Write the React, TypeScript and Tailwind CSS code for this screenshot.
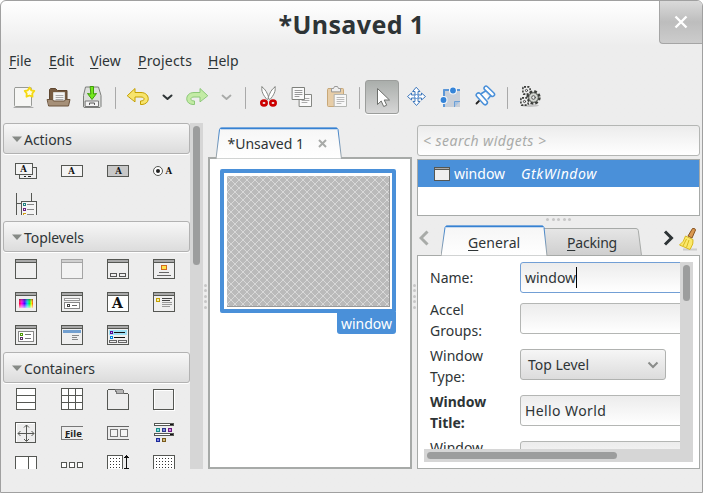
import React from "react";

type Kids = { children?: React.ReactNode };

/* One palette cell; drawings use the cell's own 46x33 pixel space. */
function Cell({ children }: Kids) {
  return (
    <svg className="block h-[33px] w-[46px]" viewBox="0 0 46 33" shapeRendering="crispEdges" fill="none">
      {children}
    </svg>
  );
}

function Glyph({ x, y, size = 9, children }: Kids & { x: number; y: number; size?: number }) {
  return (
    <text x={x} y={y} fontSize={size} fontWeight="bold" fontFamily="DejaVu Serif, serif" fill="#111" textAnchor="middle">
      {children}
    </text>
  );
}

function Win({ fill = "#efefef", stroke = "#555753", bar = "#a9a9a9", children }: Kids & { fill?: string; stroke?: string; bar?: string }) {
  return (
    <Cell>
      <rect x="12.5" y="6.5" width="21" height="19" rx="1" fill={fill} stroke={stroke} />
      <rect x="13" y="7" width="20" height="2" fill={bar} />
      <path d="M13 9.5h20" stroke={stroke} />
      {children}
    </Cell>
  );
}

function Tag({ x, y, color }: { x: number; y: number; color: string }) {
  return <rect x={x + 0.5} y={y + 0.5} width="2" height="2" stroke={color} />;
}

function Header({ title }: { title: string }) {
  return (
    <div className="flex h-8 w-[187px] shrink-0 pb-px">
      <div className="flex flex-1 items-center rounded-[3px] border border-[#b2b2b2] bg-linear-to-b from-[#f7f7f7] to-[#dcdcdc] pl-2 shadow-[0_1px_0_#fff]">
        <svg className="h-[6px] w-[10px]" viewBox="0 0 10 6">
          <path d="M0 .5h10L5 6z" fill="#868a86" />
        </svg>
        <span className="ml-[2px] pt-[2px] text-[14px] leading-none tracking-[-0.05px]">{title}</span>
      </div>
    </div>
  );
}

function Grid({ children }: Kids) {
  return <div className="grid shrink-0 grid-cols-[repeat(4,46px)]">{children}</div>;
}

function Palette() {
  return (
    <div className="flex h-[346px] w-[200px]">
      <div className="flex w-[187px] flex-col overflow-hidden">
        <Header title="Actions" />
        <Grid>
          <Cell>
            <rect x="16.5" y="12.5" width="17" height="11" rx="1" fill="#eee" stroke="#555753" />
            <path d="M21 21.5h2M25 21.5h3" stroke="#222" />
            <rect x="12.5" y="8.5" width="17" height="11" rx="1" fill="#f4f4f4" stroke="#555753" />
            <Glyph x={20.5} y={17} size={8.5}>A</Glyph>
          </Cell>
          <Cell>
            <rect x="12.5" y="10.5" width="21" height="11" rx="1" fill="#f4f4f4" stroke="#555753" />
            <Glyph x={22.5} y={19} size={8.5}>A</Glyph>
          </Cell>
          <Cell>
            <rect x="12.5" y="10.5" width="21" height="11" rx="1" fill="#c8c8c8" stroke="#555753" />
            <Glyph x={23.5} y={19} size={8.5}>A</Glyph>
          </Cell>
          <Cell>
            <g shapeRendering="auto">
              <circle cx="17" cy="16" r="4.5" fill="#fff" stroke="#555753" />
              <circle cx="17" cy="16" r="2" fill="#222" />
            </g>
            <Glyph x={27.8} y={19} size={8.5}>A</Glyph>
          </Cell>
          <Cell>
            <path d="M13.5 5v22M28.5 5v8M14 15.5h4" stroke="#555753" />
            <path d="M18.5 27V13.5h15V27" fill="#f4f4f4" stroke="#555753" />
            <path d="M24 16.5h7M24 21.5h7M24 26.5h7" stroke="#888" />
            <Tag x={20} y={15} color="#1f8080" />
            <Tag x={20} y={20} color="#6c2080" />
            <path d="M20 25.5h3M20.5 26v1" stroke="#d09a10" />
          </Cell>
        </Grid>
        <Header title="Toplevels" />
        <Grid>
          <Win />
          <Win stroke="#a4a4a4" bar="#d0d0d0" fill="#f2f2f2" />
          <Win>
            <rect x="15.5" y="20.5" width="6" height="3" rx="1" stroke="#555" />
            <rect x="24.5" y="20.5" width="6" height="3" rx="1" stroke="#555" />
          </Win>
          <Win>
            <rect x="20.5" y="12.5" width="5" height="4" fill="#ffe24a" stroke="#d2691e" />
            <path d="M18 19.5h10M16 22.5h14" stroke="#666" />
          </Win>
          <Win>
            <defs>
              <linearGradient id="hue">
                <stop offset="0" stopColor="#f02" />
                <stop offset=".2" stopColor="#f0e" />
                <stop offset=".4" stopColor="#40f" />
                <stop offset=".58" stopColor="#0cf" />
                <stop offset=".75" stopColor="#0f3" />
                <stop offset=".9" stopColor="#fe0" />
                <stop offset="1" stopColor="#f30" />
              </linearGradient>
              <linearGradient id="lum" x2="0" y2="1">
                <stop offset="0" stopColor="#333" stopOpacity=".5" />
                <stop offset=".5" stopColor="#fff" stopOpacity="0" />
                <stop offset="1" stopColor="#fff" stopOpacity=".7" />
              </linearGradient>
            </defs>
            <rect x="16" y="13" width="14" height="9" fill="url(#hue)" />
            <rect x="16" y="13" width="14" height="9" fill="url(#lum)" />
          </Win>
          <Win>
            <rect x="15.5" y="12.5" width="15" height="2" fill="#fff" stroke="#999" />
            <rect x="15.5" y="16.5" width="15" height="6" fill="#fff" stroke="#888" />
            <Tag x={18} y={18} color="#444" />
            <path d="M23 19.5h5" stroke="#666" />
          </Win>
          <Win fill="#fff">
            <Glyph x={22.5} y={22} size={14}>A</Glyph>
          </Win>
          <Win>
            <rect x="15.5" y="12.5" width="3" height="3" fill="#f4efb0" stroke="#c4a000" />
            <path d="M21 12.5h10M21 14.5h8" stroke="#444" />
            <path d="M21 16.5h10M21 18.5h10M21 20.5h8" stroke="#999" />
          </Win>
          <Win>
            <rect x="15.5" y="12.5" width="15" height="10" rx="1" fill="#fff" stroke="#888" />
            <path d="M22 15.5h6M22 19.5h6" stroke="#777" />
            <Tag x={17} y={14} color="#4e9a06" />
            <Tag x={17} y={18} color="#5c3566" />
          </Win>
          <Win>
            <rect x="14" y="11" width="18" height="3" fill="#729fcf" />
            <path d="M23 16.5h7M23 18.5h5M23 20.5h6" stroke="#888" />
          </Win>
          <Win>
            <rect x="14" y="11" width="18" height="5" fill="#9fe0f5" />
            <path d="M19 13.5h11M19 18.5h11" stroke="#111" />
            <Tag x={15} y={12} color="#5c0099" />
            <Tag x={15} y={17} color="#0084e0" />
            <rect x="14.5" y="21.5" width="7" height="2" stroke="#666" />
            <rect x="23.5" y="21.5" width="8" height="2" stroke="#666" />
          </Win>
        </Grid>
        <Header title="Containers" />
        <Grid>
          <Cell>
            <rect x="13.5" y="4.5" width="19" height="21" fill="#fff" stroke="#555753" />
            <path d="M13 11.5h20M13 18.5h20" stroke="#555753" />
          </Cell>
          <Cell>
            <rect x="12.5" y="4.5" width="21" height="21" fill="#fff" stroke="#555753" />
            <path d="M12 11.5h22M12 18.5h22M19.5 4v22M26.5 4v22" stroke="#555753" />
          </Cell>
          <Cell>
            <path d="M12.5 25.5v-19l1-1h6l3 4h10l1 1v15z" stroke="#555753" />
            <path d="M20.5 5.5h7l1 1v3h-7z" fill="#b5b5b5" stroke="#777" />
          </Cell>
          <Cell>
            <rect x="12.5" y="5.5" width="20" height="20" stroke="#555753" />
            <path d="M13.5 24.5v-18h18" stroke="#fff" />
            <path d="M33.5 6v20.5H14" stroke="#fff" />
          </Cell>
          <Cell>
            <rect x="12.5" y="5.5" width="20" height="20" rx="1" stroke="#555753" />
            <path d="M13.5 24.5V6.5h18" stroke="#fff" />
            <path d="M23.5 8v16M15 16.5h16M21 10.5l2.5-2.5 2.5 2.5M21 22l2.5 2.5L26 22M17.5 14L15 16.5l2.5 2.5M28.5 14l2.5 2.5-2.5 2.5" stroke="#555753" shapeRendering="auto" />
          </Cell>
          <Cell>
            <path d="M34 9.5H12.5v13H34" stroke="#777" />
            <text x="16" y="19.500" fontSize="9.5" fontWeight="bold" fontFamily="Noto Sans, sans-serif" textLength="17" fill="#222">File</text>
            <path d="M16 20.5h5" stroke="#222" />
          </Cell>
          <Cell>
            <path d="M34 9.5H12.5v13H34" stroke="#666" />
            <rect x="15.5" y="12.5" width="7" height="7" rx="1" fill="#f4f4f4" stroke="#777" />
            <rect x="25.5" y="12.5" width="7" height="7" rx="1" fill="#f4f4f4" stroke="#777" />
          </Cell>
          <Cell>
            <rect x="13.5" y="6.5" width="19" height="2" fill="#fff" stroke="#555753" />
            <rect x="13.5" y="16.5" width="19" height="2" fill="#fff" stroke="#555753" />
            <path d="M29 7.5h3M29 17.5h3" stroke="#111" />
            <rect x="15.5" y="11.5" width="3" height="3" fill="#8dd" stroke="#1a8a8a" />
            <rect x="21.5" y="11.5" width="3" height="3" fill="#88d" stroke="#2a3a8a" />
            <rect x="27.5" y="11.5" width="3" height="3" fill="#c8d" stroke="#6c1a80" />
            <rect x="15.5" y="21.5" width="3" height="3" fill="#88d" stroke="#1a2a9a" />
            <rect x="21.5" y="21.5" width="3" height="3" fill="#cb8" stroke="#7a5a1a" />
          </Cell>
          <Cell>
            <rect x="12.5" y="6.5" width="21" height="22" fill="#fff" stroke="#555753" />
            <path d="M25.5 6v22" stroke="#555753" />
          </Cell>
          <Cell>
            <rect x="12.5" y="12.5" width="5" height="5" rx="1" fill="#fff" stroke="#555753" />
            <rect x="20.5" y="12.5" width="5" height="5" rx="1" fill="#fff" stroke="#555753" />
            <rect x="28.5" y="12.5" width="5" height="5" rx="1" fill="#fff" stroke="#555753" />
          </Cell>
          <Cell>
            <rect x="12.5" y="5.5" width="15" height="22" fill="#fff" stroke="#555753" />
            <path d="M15 8.5h11M15 11.5h11M15 14.5h11M15 17.5h11" stroke="#333" strokeDasharray="1 2" />
            <path d="M31.5 5v14M30 6.5h3M29 7.5h5M29 18.5h5" stroke="#111" />
          </Cell>
          <Cell>
            <rect x="12.5" y="5.5" width="21" height="22" fill="#fff" stroke="#555753" />
            <path d="M15 8.5h17M15 11.5h17M15 14.5h17M15 17.5h17" stroke="#333" strokeDasharray="1 2" />
          </Cell>
        </Grid>
      </div>
      <div className="flex w-[13px] justify-center bg-[#d6d6d6] pt-[3px]">
        <div className="h-[139px] w-[7px] rounded-full bg-[#9c9d9d]" />
      </div>
    </div>
  );
}

function Grip() {
  return (
    <div className="flex flex-col items-center gap-[2.5px]">
      {[0, 1, 2, 3, 4].map((i) => (
        <i key={i} className="block size-[3px] rounded-full bg-[#c6c6c6]" />
      ))}
    </div>
  );
}

/* Toolbar drawing; x is the left edge of the slot inside the toolbar. */
function Tool({ x, w, children }: Kids & { x: number; w: number }) {
  return (
    <svg className="block shrink-0" width={w} height={36} viewBox={`${x} 79 ${w} 36`} fill="none" strokeLinejoin="round" strokeLinecap="round">
      {children}
    </svg>
  );
}

function Toolbar() {
  return (
    <div className="flex h-9">
      <Tool x={1} w={40}>
        <path d="M14 107.5h19" stroke="#aaa" />
        <rect x="14.5" y="87.5" width="17" height="19" rx="1" fill="#f6f6f4" stroke="#989a96" />
        <path d="M29.500 87.500l1.700 2.800 3.100.7-2 2.500.2 3.200-3-1.200-3 1.200.2-3.200-2-2.500 3.100-.7z" fill="#fffde0" stroke="#f5d912" strokeWidth="1.800" />
      </Tool>
      <Tool x={41} w={36}>
        <path d="M49.5 104V89.5l1-1h5l2 2h9.500V104z" fill="#775c42" stroke="#5e4630" />
        <path d="M53.500 103V92.500H64.500V103z" fill="#f4f4f4" stroke="#d9d9d5" />
        <path d="M56 95.500h7M56 97.500h7M56 99.500h7" stroke="#aaa" />
        <path d="M47.500 99.500h5l1 1.500h11l1-1.500h4.500l-1.500 6.500h-19.500z" fill="#a69078" stroke="#6c543d" />
      </Tool>
      <Tool x={77} w={33}>
        <path d="M83.500 106.500v-11l2-8.500h13l2.500 8.500v11l-1 1h-15.500z" fill="#dcdedb" stroke="#7b7d7a" />
        <rect x="85.500" y="101" width="13" height="5.500" fill="#f4f4f4" stroke="#777" />
        <path d="M89.500 104.500v-1.500h5v1.500" stroke="#555" />
        <path d="M90.500 86.500h3v7.500l3-.5-4.500 6-4.500-6 3 .5z" fill="#73e81c" stroke="#3f9d08" />
      </Tool>
      <Tool x={110} w={11}><path d="M115.500 87.500v21" stroke="#a9a9a9" /></Tool>
      <Tool x={121} w={35}>
        <path d="M127.500 95.500l7.500-7v4h6c9 0 10 11.500 1 12h-1.500v-3.500c5 0 4.500-4 .500-4h-6v4.500z" fill="#f7e46d" stroke="#c4a000" />
      </Tool>
      <Tool x={156} w={24}><path d="M163.500 95.500l4 3.500 4-3.500" stroke="#2e3436" strokeWidth="2" /></Tool>
      <Tool x={180} w={36}>
        <path d="M207.500 95.500l-7.500-7v4h-6c-9 0-10 11.500-1 12h1.500v-3.500c-5 0-4.500-4-.500-4h6v4.500z" fill="#c3eba5" stroke="#8cc878" />
      </Tool>
      <Tool x={216} w={24}><path d="M222.500 95.500l4 3.500 4-3.500" stroke="#a8aaa8" strokeWidth="1.800" /></Tool>
      <Tool x={240} w={10}><path d="M245.500 87.500v21" stroke="#a9a9a9" /></Tool>
      <Tool x={250} w={36}>
        <path d="M262 87c-1.200 4 1.500 8.500 5 12.500l2-1.200c-1.500-5-3.500-9.300-7-11.300z" fill="#fff" stroke="#858783" />
        <path d="M275 87c1.200 4-1.500 8.500-5 12.500l-2-1.200c1.500-5 3.500-9.300 7-11.300z" fill="#fff" stroke="#858783" />
        <ellipse cx="264" cy="103" rx="2.700" ry="2.400" stroke="#c00" strokeWidth="2.600" />
        <ellipse cx="273" cy="103" rx="2.700" ry="2.400" stroke="#c00" strokeWidth="2.600" />
      </Tool>
      <Tool x={286} w={36}>
        <rect x="299.500" y="94.500" width="12" height="12" fill="#fafafa" stroke="#858783" />
        <path d="M302 98.500h7M302 100.500h7M302 102.500h5" stroke="#aaa" />
        <rect x="292.500" y="87.500" width="12" height="12" fill="#fafafa" stroke="#7d7f7b" />
        <path d="M295 90.500h7M295 92.500h7M295 94.500h7M295 96.500h4" stroke="#999" />
      </Tool>
      <Tool x={322} w={32}>
        <rect x="327.500" y="88.500" width="16" height="18" rx="1" fill="#e7cda7" stroke="#c8a878" />
        <path d="M331.500 91.500v-3h2l1-2h3l1 2h2v3z" fill="#eee" stroke="#999" />
        <rect x="334.500" y="94.500" width="12" height="12" fill="#f8f8f8" stroke="#b4b6b2" />
        <path d="M337 97.500h7M337 99.500h7M337 101.500h7M337 103.500h4" stroke="#bbb" />
      </Tool>
      <Tool x={354} w={11}><path d="M359.500 87.500v21" stroke="#a9a9a9" /></Tool>
      <div className="my-px flex h-[34px] w-[34px] overflow-hidden rounded-[3px] border border-[#9b9d9b] bg-linear-to-b from-[#aaaeab] to-[#d6d6d6] shadow-[0_1px_0_#fff]">
        <svg className="size-8" viewBox="366 81 32 32">
          <path d="M377.500 88.500v16l3.700-3.500 2.500 5.500 3-1.300-2.500-5.200h5.300z" fill="#fff" stroke="#6d6f6c" strokeLinejoin="round" />
        </svg>
      </div>
      <Tool x={399} w={35}>
        <path d="M416.500 87.500l3.500 4h-2v3.500h3.500v-2l4 3.500-4 3.500v-2H418v3.500h2l-3.500 4-3.500-4h2V98h-3.500v2l-4-3.500 4-3.500v2h3.500v-3.500h-2z" fill="#fff" stroke="#3f78bd" />
        <circle cx="416.500" cy="96.500" r="2" fill="#fff" stroke="#5a8fd0" />
      </Tool>
      <Tool x={434} w={34}>
        <path d="M443 89h17v18h-17z" fill="#c9cfd8" />
        <path d="M444 96v-6h5M457 90h3M444 104v3" stroke="#5b97d8" strokeWidth="2" strokeLinecap="butt" />
        <path d="M454.500 107v-5.500h5.500" stroke="#6b9fd6" fill="#a9c3e0" strokeLinecap="butt" />
        <circle cx="453" cy="90.500" r="4" fill="#f3f6fa" />
        <circle cx="443.500" cy="100" r="4" fill="#f3f6fa" />
        <circle cx="453" cy="90.500" r="2.900" fill="#3584d8" />
        <circle cx="443.500" cy="100" r="2.900" fill="#3584d8" />
      </Tool>
      <Tool x={468} w={34}>
        <path d="M479 101l-2.500 2.500" stroke="#222" strokeWidth="1.800" />
        <path d="M485 92l4 5.500-1.500 2.500-6.500-6z" fill="#fdfdfd" />
        <path d="M481.500 93.500l4-2.500M488 99l2.500-3" stroke="#4a90d9" strokeWidth="1.500" />
        <rect x="-6.500" y="-2" width="13" height="4" rx="2" transform="translate(489.300 91.300) rotate(44)" fill="#fdfdfd" stroke="#4a90d9" strokeWidth="1.500" />
        <rect x="-7.200" y="-2.200" width="14.400" height="4.400" rx="2.200" transform="translate(481.800 98.800) rotate(48)" fill="#fdfdfd" stroke="#4a90d9" strokeWidth="1.500" />
      </Tool>
      <Tool x={502} w={11}><path d="M507.500 87.500v21" stroke="#a9a9a9" /></Tool>
      <Tool x={513} w={35}>
        <ellipse cx="530" cy="105.500" rx="9" ry="1.500" fill="#c4c4c4" />
        <g stroke="#3c3e3b" strokeLinecap="butt">
          <circle cx="533.500" cy="97.500" r="6" fill="#c5c8c3" strokeWidth="2.400" strokeDasharray="2.700 2.010" />
          <circle cx="533.500" cy="97.500" r="4.800" fill="#d3d6d1" strokeWidth=".9" />
          <rect x="523" y="87" width="7" height="7" rx="1" fill="#eee" strokeWidth="1.800" strokeDasharray="2 1.300" />
          <rect x="521" y="98" width="7" height="7" rx="1" fill="#eee" strokeWidth="1.800" strokeDasharray="2 1.300" />
        </g>
        <rect x="523.800" y="87.800" width="5.400" height="5.400" fill="#eee" />
        <rect x="521.800" y="98.800" width="5.400" height="5.400" fill="#eee" />
        <circle cx="526.500" cy="90.500" r="1.100" stroke="#444" />
        <circle cx="524.500" cy="101.500" r="1.100" stroke="#444" />
        <circle cx="533.500" cy="97.500" r="1.800" fill="#eee" stroke="#555" />
      </Tool>
    </div>
  );
}

function MenuItem({ label, className }: { label: string; className: string }) {
  return (
    <span className={`whitespace-nowrap ${className}`}>
      <span className="underline underline-offset-2">{label[0]}</span>
      {label.slice(1)}
    </span>
  );
}

function Workspace() {
  return (
    <div className="flex h-[346px] w-[204px] flex-col pt-[4px]">
      <div className="relative z-10 -mb-[2px] ml-[7px] h-[32px] w-[127px]">
        <svg className="absolute inset-0" width="127" height="32" viewBox="0 0 127 32">
          <defs>
            <linearGradient id="tabFill" x2="0" y2="1"><stop stopColor="#f6f6f6" /><stop offset="1" stopColor="#fff" /></linearGradient>
            <linearGradient id="tabEdge" x2="0" y2="1"><stop stopColor="#3581d2" /><stop offset="1" stopColor="#a5a8a6" /></linearGradient>
          </defs>
          <path d="M1 32L4.500 2.500Q4.800 1 6.500 1H121q1.700 0 2 1.500L126.500 32z" fill="url(#tabFill)" stroke="url(#tabEdge)" />
          <path d="M5.500 1.500H122" stroke="#3581d2" strokeWidth="1.600" />
        </svg>
        <div className="relative flex h-full items-center pl-[12.500px]">
          <span className="whitespace-nowrap pt-[2px] text-[14px] leading-none">*Unsaved 1</span>
          <svg className="ml-auto mr-[15.500px] h-[9px] w-[9px]" viewBox="0 0 9 9"><path d="M1 1l7 7M8 1L1 8" stroke="#a8aaa8" strokeWidth="2" /></svg>
        </div>
      </div>
      <div className="flex flex-1 flex-col items-start border-2 border-[#a7aaa8] bg-white pl-[10px] pt-[10px]">
        <div className="h-36 w-44 rounded-[2px] border-4 border-[#4a90d9] pb-[2px] pl-[3px] pr-[2px] pt-[3px]">
          <svg className="block h-full w-full border-b border-r border-[#999]" shapeRendering="crispEdges">
            <defs>
              <pattern id="mesh" width="8" height="8" patternUnits="userSpaceOnUse">
                <rect width="8" height="8" fill="#bababa" />
                <path d="M0 0l8 8M8 0L0 8" stroke="#d8d8d8" />
              </pattern>
            </defs>
            <rect width="100%" height="100%" fill="url(#mesh)" />
          </svg>
        </div>
        <div className="-mt-px ml-[117px] flex h-[22px] w-[59px] items-center justify-center rounded-b-[3px] bg-[#4a90d9] pt-[2px] text-[14px] leading-none text-white">window</div>
      </div>
    </div>
  );
}

const entry = "h-[31px] shrink-0 rounded-[3px] border border-[#b4b6b4] bg-linear-to-b from-[#ececec] to-[#fff]";

function Row({ label, bold, children }: Kids & { label: string; bold?: boolean }) {
  return (
    <div className="flex h-[46px] shrink-0">
      <div className={`w-24 shrink-0 pl-[6px] text-[14px] leading-[21px] ${bold ? "font-bold" : ""}`}>
        <div className="-mt-[4px] w-[80px]">{label}</div>
      </div>
      {children}
    </div>
  );
}

function Properties() {
  return (
    <div className="flex h-[346px] w-[283px] flex-col pt-[2px]">
      <div className="flex h-[31px] items-center rounded-[3px] border border-[#b4b6b4] bg-linear-to-b from-[#ececec] to-white pl-[5px] text-[14px] italic tracking-[0.45px] text-[#a9aba9]">
        &lt; search widgets &gt;
      </div>
      <div className="mt-[3px] h-[57px] border border-[#a7aaa8] bg-white">
        <div className="flex h-[27px] items-center bg-[#4a90d9] pt-px text-[14px] leading-none text-white">
          <svg className="mb-px ml-[16px] h-[14px] w-[16px]" viewBox="0 0 16 14" shapeRendering="crispEdges">
            <rect x=".5" y=".5" width="15" height="13" fill="#efefef" stroke="#555753" />
            <path d="M1 1.500h14" stroke="#aaa" /><path d="M1 2.500h14" stroke="#555753" />
          </svg>
          <span className="ml-[4px] w-[67px]">window</span>
          <span className="italic tracking-[0.6px]">GtkWindow</span>
        </div>
      </div>
      <div className="flex h-[6px] items-center justify-center gap-[2.500px]">
        {[0, 1, 2, 3, 4].map((i) => <i key={i} className="block size-[3px] rounded-full bg-[#c6c6c6]" />)}
      </div>
      <div className="relative z-10 -mb-px flex h-[34px] items-end">
        <svg className="mb-[10px] ml-[2px] h-[16px] w-[10px]" viewBox="0 0 10 16"><path d="M8.500 1.500L2 8l6.500 6.500" fill="none" stroke="#a8aba8" strokeWidth="3" /></svg>
        <div className="relative ml-[12px] h-[31px] w-[216px]">
          <svg className="absolute inset-0" width="216" height="31" viewBox="0 0 216 31">
            <defs><linearGradient id="tabOff" x2="0" y2="1"><stop stopColor="#e6e6e6" /><stop offset="1" stopColor="#cfcfcf" /></linearGradient></defs>
            <path d="M100 30.500V3.500h95q2 0 2.300 2L200.500 30.500z" fill="url(#tabOff)" stroke="#a7aaa8" />
            <path d="M0 31L4 2.500Q4.300 1 6 1h95q1.700 0 2 1.500L106 31z" fill="url(#tabFill)" stroke="url(#tabEdge)" />
            <path d="M5 1.500h97" stroke="#3581d2" strokeWidth="1.600" />
          </svg>
          <div className="relative flex h-full items-center pt-[4px] text-[14px] leading-none">
            <MenuItem label="General" className="ml-[27px] w-[99px] tracking-[0.1px]" />
            <MenuItem label="Packing" className="tracking-[-0.2px]" />
          </div>
        </div>
        <svg className="mb-[10px] ml-[6px] h-[16px] w-[11px]" viewBox="0 0 11 16"><path d="M2 1.500L8.500 8 2 14.500" fill="none" stroke="#2e3436" strokeWidth="3" /></svg>
        <svg className="mb-[5px] ml-[4px] h-[24px] w-[20px]" viewBox="0 0 20 24">
          <path d="M5 22.500h14" stroke="#ccc" strokeWidth="2" />
          <path d="M14.500 1.500q3-.5 3 1.500L14 11l-4-2z" fill="#d99850" stroke="#87521e" />
          <path d="M7.500 9l7.500 3.500q1 4-3 10L1.500 18q4.500-3 6-9z" fill="#fbe96b" stroke="#d8b820" />
          <path d="M8.500 12L5 19M11 13l-2.500 7.500" stroke="#d8b820" />
        </svg>
      </div>
      <div className="flex h-[214px] flex-col border border-[#a7aaa8] bg-white p-[6px]">
        <div className="flex h-[187px]">
          <div className="flex w-[256px] flex-col overflow-hidden">
            <div className="flex h-[41px] shrink-0">
              <div className="w-24 shrink-0 pl-[6px] pt-[5px] text-[14px] leading-[21px]">Name:</div>
              <div className="flex h-[31px] w-[190px] shrink-0 items-center rounded-[3px] border border-[#729fd5] bg-linear-to-b from-[#ececec] to-white pl-[4px] text-[14px]">
                window<i className="block h-[21px] w-px bg-black" />
              </div>
            </div>
            <Row label="Accel Groups:"><div className={`${entry} w-[190px]`} /></Row>
            <Row label="Window Type:">
              <div className="flex h-[31px] w-[146px] items-center justify-between rounded-[3px] border border-[#b0b2b0] bg-linear-to-b from-[#f6f6f6] to-[#dcdcdc] pl-[7px] pr-[6px] text-[14px]">
                Top Level
                <svg className="h-[8px] w-[12px]" viewBox="0 0 12 8"><path d="M1.500 1.500L6 6l4.500-4.500" fill="none" stroke="#8a8c8a" strokeWidth="2" /></svg>
              </div>
            </Row>
            <Row label="Window Title:" bold>
              <div className={`${entry} flex w-[190px] items-center pl-[4px] text-[14px] tracking-[0.4px]`}>Hello World</div>
            </Row>
            <Row label="Window"><div className={`${entry} w-[190px]`} /></Row>
          </div>
          <div className="flex w-[13px] justify-center bg-[#d6d6d6] pt-[3px]">
            <div className="h-[36px] w-[7px] rounded-full bg-[#9c9d9d]" />
          </div>
        </div>
        <div className="flex h-[13px] w-[269px] items-center bg-[#d6d6d6] pl-[3px]">
          <div className="h-[7px] w-[190px] rounded-full bg-[#9c9d9d]" />
        </div>
      </div>
    </div>
  );
}

export default function App() {
  return (
    <div className="h-[493px] w-[703px] overflow-hidden bg-white font-['Noto_Sans',sans-serif] text-[#2e3436]">
      <div className="flex h-full flex-col overflow-hidden rounded-t-[6px] border border-[#a0a0a0] bg-[#ededed] bg-linear-to-b from-white from-0% to-[#ededed] to-[45px]">
        <header className="flex h-[43px] shrink-0 items-start">
          <div className="w-[43px]" />
          <h1 className="flex-1 pt-[5px] text-center text-[25px] font-bold leading-[36px] tracking-[0.4px]">*Unsaved 1</h1>
          <div className="flex h-[43px] w-[43px] items-center justify-center rounded-bl-[4px] border-b border-l border-[#a5a5a5] bg-linear-to-b from-[#dadada] via-[#bdbdbd] via-50% to-[#cccccc]">
            <svg className="h-[14px] w-[14px]" viewBox="0 0 14 14"><path d="M1.500 1.500l11 11M12.500 1.500l-11 11" stroke="#fff" strokeWidth="2.400" /></svg>
          </div>
        </header>
        <nav className="flex h-[35px] shrink-0 items-center pb-[2px] pl-[8px] text-[14px] leading-none">
          <MenuItem label="File" className="w-[40px]" />
          <MenuItem label="Edit" className="w-[41px]" />
          <MenuItem label="View" className="w-[48px]" />
          <MenuItem label="Projects" className="w-[70px] tracking-[0.2px]" />
          <MenuItem label="Help" className="" />
        </nav>
        <Toolbar />
        <main className="flex pl-[2px] pt-[8px]">
          <Palette />
          <div className="flex w-[5px] items-center justify-center"><Grip /></div>
          <Workspace />
          <div className="flex w-[5px] items-center justify-center"><Grip /></div>
          <Properties />
        </main>
      </div>
    </div>
  );
}
